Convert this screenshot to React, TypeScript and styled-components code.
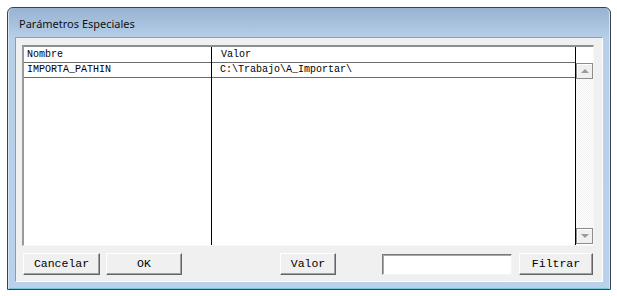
import React from "react";
import styled, { createGlobalStyle } from "styled-components";

const GlobalStyle = createGlobalStyle`
  html, body { margin: 0; padding: 0; background: #ffffff; }
  * { box-sizing: border-box; }
`;

const Page = styled.div`
  padding: 7px 0 0 7px;
`;

const Window = styled.div`
  width: 604px;
  height: 283px;
  border: 1px solid #3c4350;
  border-radius: 6px 6px 0 0;
  background: linear-gradient(180deg, #98b3d1 0px, #a9c3df 18px, #b8cfe8 30px, #b9d1ea 100%);
  display: flex;
  flex-direction: column;
  padding: 0 7px 7px 7px;
  box-shadow: inset 1px 0 0 #d6e4f3, inset -1px 0 0 #d6e4f3, inset 0 -1px 0 #7ec3dd;
`;

const TitleBar = styled.div`
  height: 29px;
  display: flex;
  align-items: center;
  padding-left: 4px;
  padding-top: 2px;
  font-family: "Noto Sans", "Open Sans", sans-serif;
  font-size: 11px;
  color: #111;
`;

const Client = styled.div`
  flex: 1;
  background: #f0f0f0;
  border: 1px solid;
  border-color: #9a9a9a #ffffff #ffffff #9a9a9a;
  padding: 7px 8px 6px 6px;
  display: flex;
  flex-direction: column;
  gap: 7px;
`;

const ListFrame = styled.div`
  height: 201px;
  display: flex;
  background: #ffffff;
  border-style: solid;
  border-width: 2px 1px 1px 2px;
  border-color: #8e8e8e #f8f8f8 #f8f8f8 #9a9a9a;
  font-family: "Liberation Mono", "DejaVu Sans Mono", monospace;
  font-size: 10px;
  color: #000;
`;

const Column = styled.div<{ $w?: number }>`
  ${(p) => (p.$w ? `width: ${p.$w}px; flex: none;` : "flex: 1;")}
  border-right: 1px solid #000;
  display: flex;
  flex-direction: column;
`;

const HeaderCell = styled.div`
  height: 16px;
  border-bottom: 1px solid #6e6e6e;
  padding: 0 0 0 3px;
  line-height: 15px;
  white-space: pre;
`;

const Cell = styled.div<{ $indent: number }>`
  height: 15px;
  border-bottom: 1px solid #6e6e6e;
  padding-left: ${(p) => p.$indent}px;
  line-height: 14px;
  white-space: pre;
`;

const ScrollColumn = styled.div`
  width: 17px;
  flex: none;
  display: flex;
  flex-direction: column;
  padding-bottom: 1px;
`;

const ScrollSpacer = styled.div`
  height: 16px;
  flex: none;
`;

const ScrollButton = styled.div`
  height: 16px;
  flex: none;
  background: #f0f0f0;
  border: 1px solid;
  border-color: #8c8c8c;
  box-shadow: inset 1px 1px 0 #ffffff;
  display: flex;
  align-items: center;
  justify-content: center;
`;

const Arrow = styled.span<{ $up: boolean }>`
  width: 0;
  height: 0;
  border-left: 4px solid transparent;
  border-right: 4px solid transparent;
  ${(p) =>
    p.$up
      ? "border-bottom: 4px solid #9a9a9a;"
      : "border-top: 4px solid #9a9a9a;"}
`;

const Track = styled.div`
  flex: 1;
  background-color: #ffffff;
  background-image: repeating-conic-gradient(#f1f1f1 0 25%, #ffffff 0 50%);
  background-size: 2px 2px;
`;

const ButtonRow = styled.div`
  display: flex;
  align-items: center;
  height: 22px;
  padding-left: 1px;
`;

const Button = styled.button<{ $w: number; $ml?: number }>`
  width: ${(p) => p.$w}px;
  height: 22px;
  margin-left: ${(p) => p.$ml ?? 0}px;
  background: #f0f0f0;
  border: 1px solid;
  border-color: #ffffff #646464 #646464 #ffffff;
  box-shadow: inset -1px -1px 0 #a0a0a0;
  font-family: "Liberation Mono", "DejaVu Sans Mono", monospace;
  font-size: 11.5px;
  color: #000;
  padding: 0;
  line-height: 18px;
`;

const TextBox = styled.input<{ $w: number; $ml?: number }>`
  width: ${(p) => p.$w}px;
  height: 21px;
  margin-left: ${(p) => p.$ml ?? 0}px;
  background: #ffffff;
  border: 1px solid;
  border-color: #7a7a7a #f4f4f4 #f4f4f4 #7a7a7a;
  box-shadow: inset 1px 1px 0 #a8a8a8;
  padding: 0 3px;
  outline: none;
  font-family: "Liberation Mono", "DejaVu Sans Mono", monospace;
  font-size: 11px;
`;

const rows = [{ name: "IMPORTA_PATHIN", value: "C:\\Trabajo\\A_Importar\\" }];

export default function App() {
  return (
    <>
      <GlobalStyle />
      <Page>
        <Window>
          <TitleBar>Parámetros Especiales</TitleBar>
          <Client>
            <ListFrame>
              <Column $w={188}>
                <HeaderCell>Nombre</HeaderCell>
                {rows.map((r) => (
                  <Cell key={r.name} $indent={3}>
                    {r.name}
                  </Cell>
                ))}
              </Column>
              <Column>
                <HeaderCell>{" Valor"}</HeaderCell>
                {rows.map((r) => (
                  <Cell key={r.name} $indent={8}>
                    {r.value}
                  </Cell>
                ))}
              </Column>
              <ScrollColumn>
                <ScrollSpacer />
                <ScrollButton>
                  <Arrow $up={true} />
                </ScrollButton>
                <Track />
                <ScrollButton>
                  <Arrow $up={false} />
                </ScrollButton>
              </ScrollColumn>
            </ListFrame>
            <ButtonRow>
              <Button $w={77}>Cancelar</Button>
              <Button $w={76} $ml={6}>OK</Button>
              <Button $w={56} $ml={98}>Valor</Button>
              <TextBox $w={130} $ml={46} />
              <Button $w={74} $ml={7}>Filtrar</Button>
            </ButtonRow>
          </Client>
        </Window>
      </Page>
    </>
  );
}
